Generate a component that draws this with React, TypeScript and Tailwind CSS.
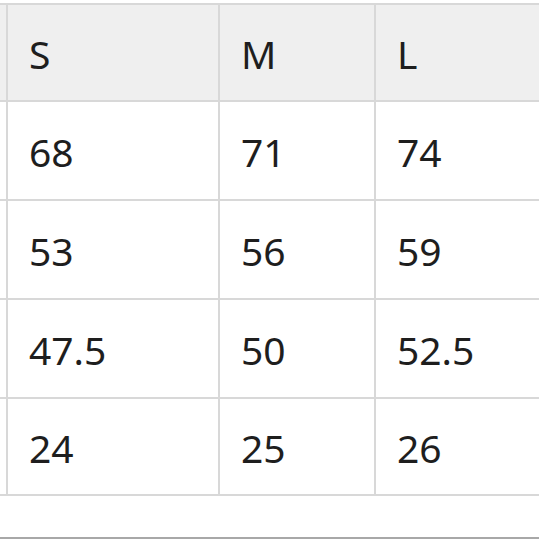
const rows = [
  ['68', '71', '74'],
  ['53', '56', '59'],
  ['47.5', '50', '52.5'],
  ['24', '25', '26'],
];

function Row({ cells, header, height }: { cells: string[]; header?: boolean; height: string }) {
  const bg = header ? 'bg-[#efefef]' : 'bg-white';
  return (
    <div className={`flex ${height}`}>
      <div className={`w-[8px] shrink-0 border-r-2 border-b-2 border-[#d8d8d8] ${bg}`} />
      {cells.map((c, i) => (
        <div
          key={i}
          className={`shrink-0 flex items-center border-r-2 border-b-2 border-[#d8d8d8] pl-[21px] ${bg} ${
            i === 0 ? 'w-[212px]' : i === 1 ? 'w-[156px]' : 'w-[200px]'
          }`}
        >
          <span className="text-[39px] leading-none text-[#1e1e1e] pt-[1px]">{c}</span>
        </div>
      ))}
    </div>
  );
}

export default function App() {
  return (
    <div
      className="w-[539px] h-[539px] bg-white overflow-hidden"
      style={{ fontFamily: '"Noto Sans", "Open Sans", sans-serif' }}
    >
      <div className="mt-[3px] border-t-2 border-[#d8d8d8] w-[600px]">
        <Row cells={['S', 'M', 'L']} header height="h-[97px]" />
        <Row cells={rows[0]} height="h-[99px]" />
        <Row cells={rows[1]} height="h-[99px]" />
        <Row cells={rows[2]} height="h-[99px]" />
        <Row cells={rows[3]} height="h-[97px]" />
      </div>
      <div className="mt-[41px] h-[2px] bg-[#a8a8a8]" />
    </div>
  );
}
